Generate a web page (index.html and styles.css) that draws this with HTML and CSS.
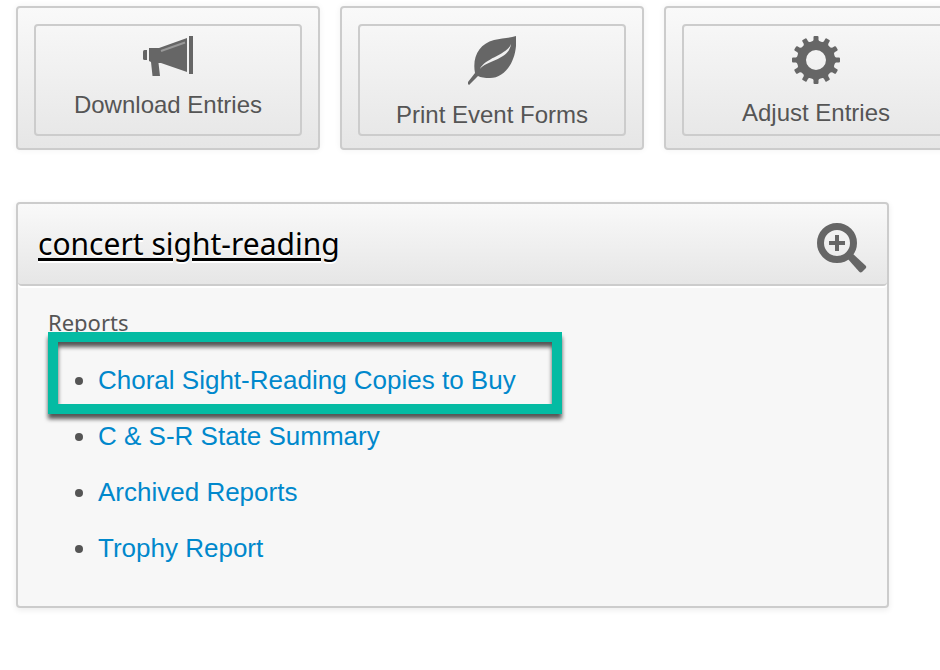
FILE: index.html
```html
<!DOCTYPE html>
<html lang="en">
<head>
<meta charset="UTF-8"/>
<meta name="viewport" content="width=device-width,initial-scale=1"/>
<title>Concert Sight-Reading</title>
<link rel="stylesheet" href="styles.css">
</head>
<body>
<nav class="tiles">
  <a class="tile" href="#download">
    <span class="tile-inner">
      <svg width="50" height="40" viewBox="0 0 50 40" aria-hidden="true">
        <path d="M0 15.500Q0 14 1.500 14H4V24H1.500Q0 24 0 22.500Z"/>
        <path d="M6 12H16L44 2V36L18 27H15.500L17 40H9.500L8 26L6 25Z"/>
        <path d="M46 0H50V38H46Z"/>
        <path class="shine" d="M18 15L42 6.500"/>
      </svg>
      <span>Download Entries</span>
    </span>
  </a>
  <a class="tile" href="#print">
    <span class="tile-inner">
      <svg width="48" height="50" viewBox="0 0 48 50" aria-hidden="true">
        <path d="M48 0C50 23 38 42 22 42Q14 42 10 40L1 49L0 48V46L7 37C4 21 11 8 26 4C34 2 42 2 48 0Z"/>
        <path class="vein" d="M12 33C17 22 39 19 43 8C41 24 19 24 12 33Z"/>
      </svg>
      <span>Print Event Forms</span>
    </span>
  </a>
  <a class="tile" href="#adjust">
    <span class="tile-inner">
      <svg width="48" height="48" viewBox="0 0 48 48" aria-hidden="true">
        <circle class="ring" cx="24" cy="24" r="14.500"/>
        <g id="teeth">
          <path id="tooth" d="M20 6L21.500 4V1Q21.500 0 22.500 0H25.500Q26.500 0 26.500 1V4L28 6Z"/>
          <use href="#tooth" transform="rotate(30 24 24)"/>
          <use href="#tooth" transform="rotate(60 24 24)"/>
        </g>
        <use href="#teeth" transform="rotate(90 24 24)"/>
        <use href="#teeth" transform="rotate(180 24 24)"/>
        <use href="#teeth" transform="rotate(270 24 24)"/>
      </svg>
      <span>Adjust Entries</span>
    </span>
  </a>
</nav>

<section class="panel">
  <header class="panel-head">
    <h2><a href="#concert">concert sight-reading</a></h2>
    <button class="zoom" type="button" aria-label="View details">
      <svg width="50" height="50" viewBox="0 0 50 50" aria-hidden="true">
        <circle class="lens" cx="20" cy="20" r="16.500"/>
        <path d="M18 12H22V18H28V22H22V28H18V22H12V18H18Z"/>
        <path d="M30 35L35 30L48.500 42.500Q50 44 48.500 45.500L45 49Q43.500 50 42 48.500Z"/>
      </svg>
    </button>
  </header>
  <div class="panel-body">
    <h3>Reports</h3>
    <ul>
      <li class="marked"><a href="#copies">Choral Sight-Reading Copies to Buy</a></li>
      <li><a href="#summary">C &amp; S-R State Summary</a></li>
      <li><a href="#archived">Archived Reports</a></li>
      <li><a href="#trophy">Trophy Report</a></li>
    </ul>
  </div>
</section>
</body>
</html>
```
FILE: styles.css
```css
*,*::after{box-sizing:border-box;margin:0;padding:0}
body{background:#fff;font-family:'Liberation Sans',Arial,sans-serif;color:#555;padding:6px 0 60px 16px;overflow-x:hidden}
svg{display:block;flex-shrink:0;fill:#666}

.tiles{display:flex;gap:20px}
.tile{flex:0 0 304px;height:144px;display:flex;padding:16px 16px 12px;border:2px solid #ccc;border-radius:4px;background:linear-gradient(#f9f9f9,#e6e6e6);box-shadow:0 0 6px rgba(0,0,0,.06);color:#555;font-size:24px;line-height:38px;text-decoration:none}
.tile-inner{flex:1;display:flex;flex-direction:column;align-items:center;gap:10px;padding-top:10px;border:2px solid #ccc;border-radius:4px}
.shine{fill:none;stroke:#999;stroke-width:2}
.vein{fill:#f0f0f0}
.ring{fill:none;stroke:#666;stroke-width:9}

.panel{margin:52px 51px 0 0;border:2px solid #ccc;border-radius:4px;background:#f7f7f7;box-shadow:0 2px 6px rgba(0,0,0,.08)}
.panel-head{display:flex;align-items:center;justify-content:space-between;height:82px;padding:8px 20px 0;border-bottom:2px solid #ccc;border-radius:4px;background:linear-gradient(#f9f9f9,#e6e6e6);box-shadow:0 2px 0 #fff}
.panel-head h2{font-family:'Noto Sans','Open Sans',sans-serif;font-size:30px;font-weight:400;line-height:40px;padding-bottom:8px}
.panel-head a{color:#000;text-decoration-thickness:3px;text-underline-offset:3px;text-shadow:0 2px 0 #fff}
.zoom{border:0;background:none;cursor:pointer}
.lens{fill:none;stroke:#666;stroke-width:7}

.panel-body{padding:16px 30px 30px}
.panel-body h3{font-family:'Noto Sans','Open Sans',sans-serif;font-size:22px;font-weight:400;line-height:40px;margin-bottom:10px}
.panel-body ul{padding-left:50px}
.panel-body li{position:relative;font-size:26px;line-height:56px}
.panel-body li a{color:#08c;text-decoration:none}
/* highlight frame, laid over the first report and its neighbours */
.marked::after{content:"";position:absolute;left:-50px;top:-20px;width:514px;height:82px;border:10px solid #04bba3;filter:drop-shadow(0 5px 2px rgba(0,0,0,.65));pointer-events:none}
```
